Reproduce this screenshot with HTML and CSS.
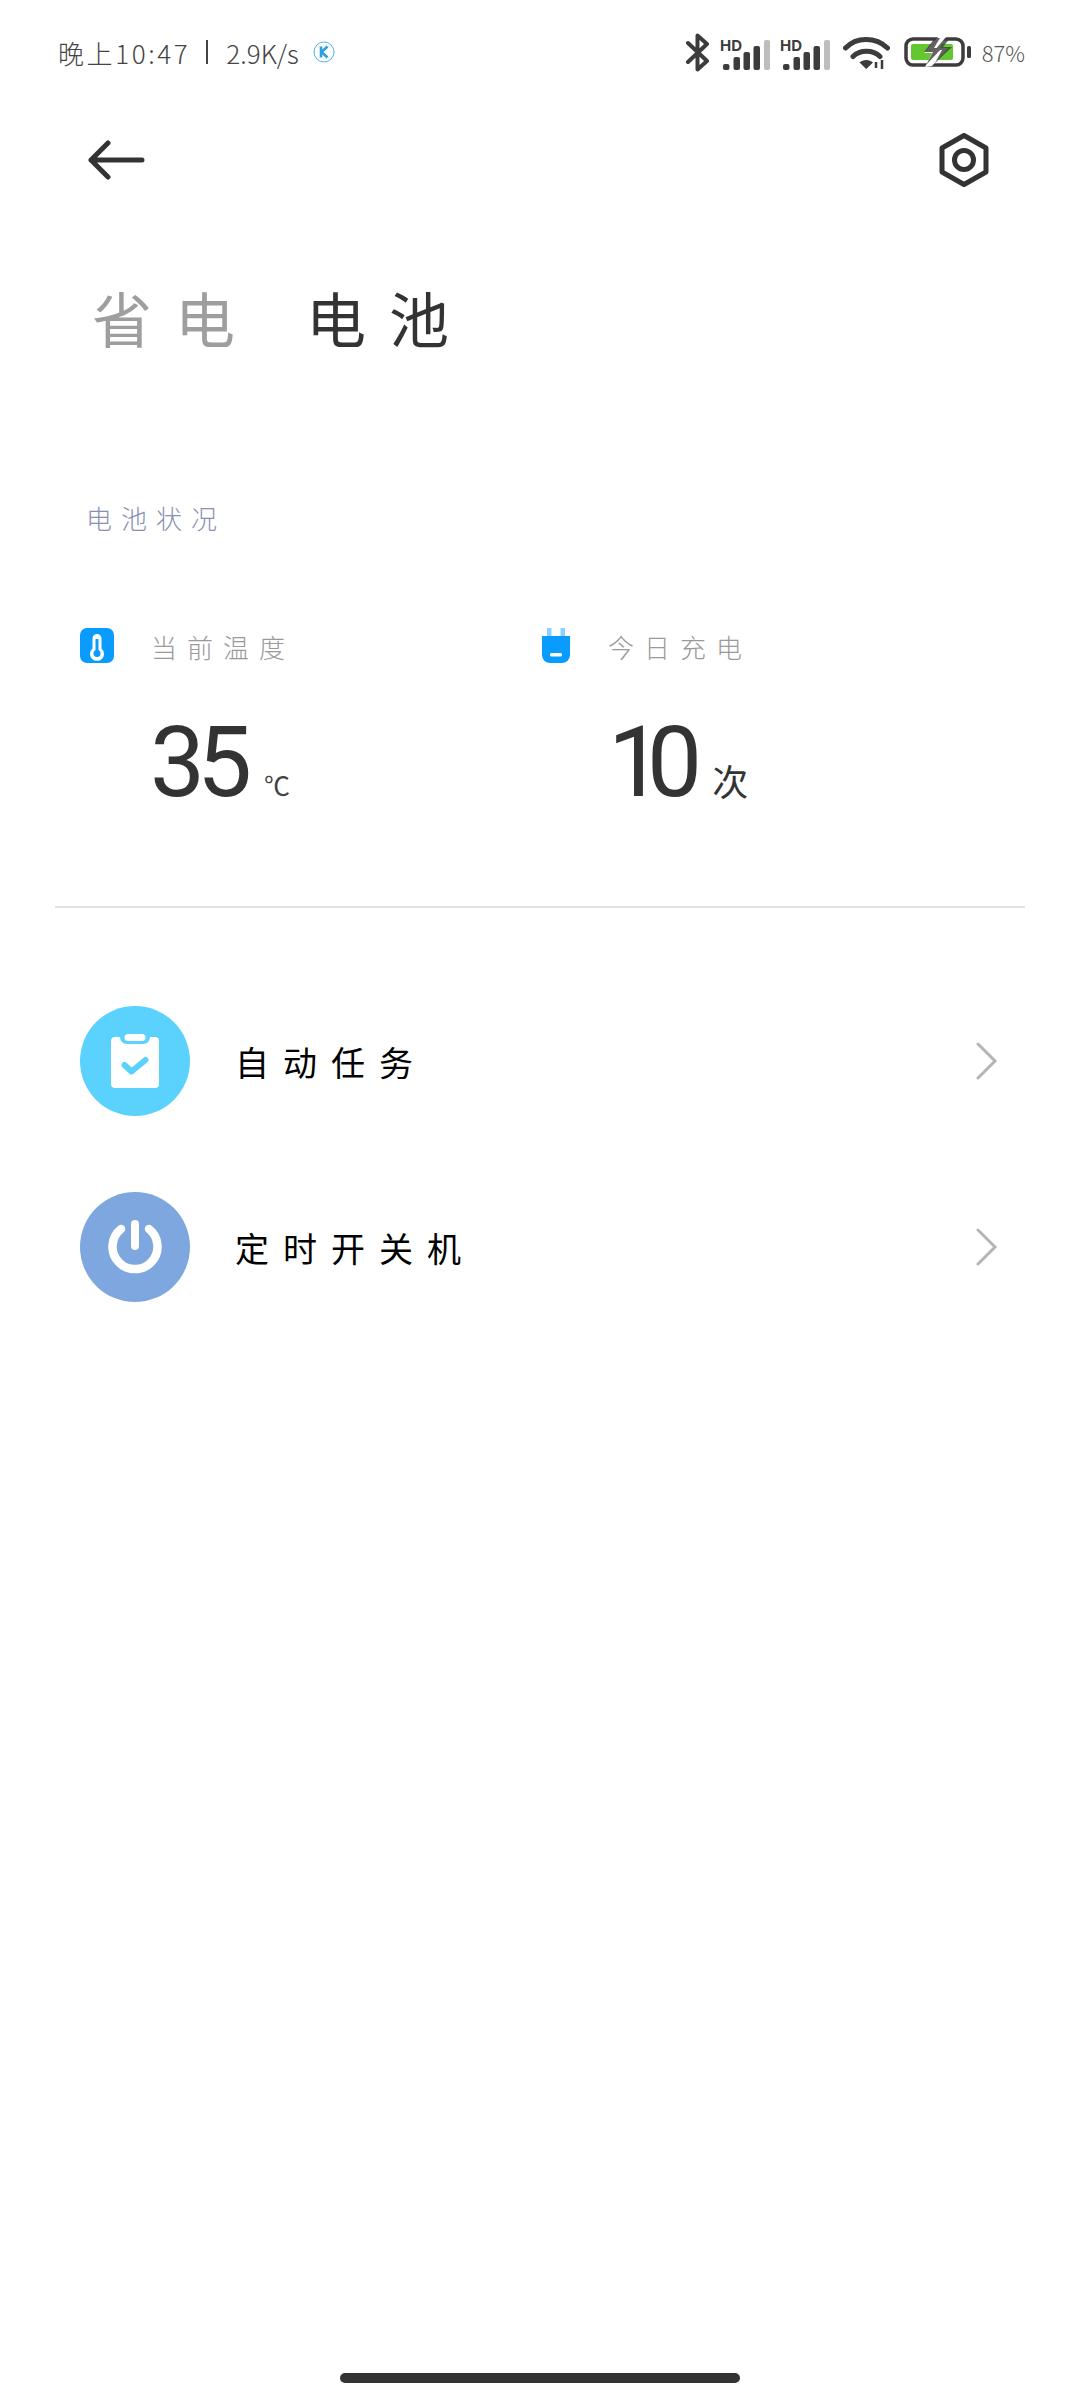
FILE: index.html
```html
<!DOCTYPE html>
<html lang="zh-CN">
<head>
    <meta charset="UTF-8">
    <title>电池</title>
    <link rel="stylesheet" href="styles.css">
</head>
<body>
<div class="page">
    <!-- status bar -->
    <div class="status">
        <div class="status-left">
            <span class="clock">晚上10:47</span>
            <span class="sep"></span>
            <span class="speed">2.9K/s</span>
            <svg class="k-badge" width="22" height="22" viewBox="0 0 22 22">
                <circle cx="11" cy="11" r="10" fill="none" stroke="#4db4e8" stroke-width="1"/>
                <path d="M8 5.500v11M14.500 5.500L8.500 11l6 5.500" fill="none" stroke="#2b9fe0" stroke-width="2.600"/>
            </svg>
        </div>
        <div class="status-right">
            <svg width="25" height="39" viewBox="0 0 25 39">
                <path d="M3 10l19 18-9.500 8.500V2.500L22 11 3 29" fill="none" stroke="#3c3c3c" stroke-width="4" stroke-linecap="round" stroke-linejoin="round"/>
            </svg>
            <svg class="sig" width="52" height="38" viewBox="0 -6 52 38">
                <text x="0" y="12" class="hd">HD</text>
                <rect x="3" y="25" width="6.500" height="6" rx="2" fill="#3c3c3c"/>
                <rect x="13.500" y="18" width="6.500" height="13" rx="2" fill="#3c3c3c"/>
                <rect x="23.500" y="13" width="6.500" height="18" rx="2" fill="#3c3c3c"/>
                <rect x="33.500" y="7" width="6.500" height="24" rx="2" fill="#3c3c3c"/>
                <rect x="44" y="1" width="6" height="30" rx="2" fill="#bdbdbd"/>
            </svg>
            <svg class="sig sig-second" width="52" height="38" viewBox="0 -6 52 38">
                <text x="0" y="12" class="hd">HD</text>
                <rect x="3" y="25" width="6.500" height="6" rx="2" fill="#3c3c3c"/>
                <rect x="13.500" y="18" width="6.500" height="13" rx="2" fill="#3c3c3c"/>
                <rect x="23.500" y="13" width="6.500" height="18" rx="2" fill="#3c3c3c"/>
                <rect x="33.500" y="7" width="6.500" height="24" rx="2" fill="#3c3c3c"/>
                <rect x="44" y="1" width="6" height="30" rx="2" fill="#bdbdbd"/>
            </svg>
            <svg class="wifi" width="47" height="34" viewBox="0 0 47 34">
                <path d="M2.500 13C13 1.500 33 1.500 44.500 13M10 21.500c7-7 20-7 27 0" fill="none" stroke="#3c3c3c" stroke-width="5" stroke-linecap="round"/>
                <path d="M16.500 27.500c3.500-3.500 10-3.500 13.500 0l-6.750 6.500z" fill="#3c3c3c"/>
                <path d="M33 27v6M39 25v9" stroke="#3c3c3c" stroke-width="2.500"/>
            </svg>
            <svg class="batt" width="68" height="30" viewBox="0 0 68 30">
                <rect x="2" y="2" width="57" height="26" rx="7" fill="none" stroke="#3c3c3c" stroke-width="3.500"/>
                <rect x="7" y="7" width="42" height="16" rx="2" fill="#63c72f"/>
                <path d="M34 0L20 16h8l-7 14 7-1 16-18h-8l6-11z" fill="#fff"/>
                <path d="M31 1L20 15h9l-7 13 16-17h-8l6-10zM41 1L31 13h7l-7 13 17-16h-9l7-9z" fill="#3c3c3c" opacity=".8"/>
                <rect x="63" y="9" width="4" height="12" rx="1.500" fill="#3c3c3c"/>
            </svg>
            <span class="pct">87%</span>
        </div>
    </div>

    <!-- nav -->
    <div class="nav">
        <svg width="57" height="40" viewBox="0 0 57 40">
            <path d="M54 20H3M20 3L3 20l17 17" fill="none" stroke="#333" stroke-width="5" stroke-linecap="round" stroke-linejoin="round"/>
        </svg>
        <svg width="50" height="54" viewBox="0 0 50 54">
            <path d="M25 2.500l22 12.500v24L25 51.500 3 39V15z" fill="none" stroke="#333" stroke-width="5" stroke-linejoin="round"/>
            <circle cx="25" cy="27" r="9.500" fill="none" stroke="#333" stroke-width="5"/>
        </svg>
    </div>

    <!-- tabs -->
    <div class="tabs">
        <span class="tab tab-off">省电</span>
        <span class="tab">电池</span>
    </div>

    <div class="section-title">电池状况</div>

    <div class="stats">
        <div class="stat">
            <div class="stat-head">
                <svg width="34" height="36" viewBox="0 0 34 36">
                    <rect width="34" height="35" rx="7" fill="#0a9bff"/>
                    <path d="M17 6a4.500 4.500 0 0 0-4.500 4.500v10a7 7 0 1 0 9 0v-10A4.500 4.500 0 0 0 17 6z" fill="#fff"/>
                    <circle cx="17" cy="25.500" r="3.500" fill="#0a9bff"/>
                    <rect x="15.500" y="11" width="3" height="13" fill="#0a9bff"/>
                </svg>
                <span class="stat-label">当前温度</span>
            </div>
            <div class="stat-value">
                <span class="num">35</span>
                <span class="unit-temp">℃</span>
            </div>
        </div>
        <div class="stat">
            <div class="stat-head">
                <svg width="30" height="36" viewBox="0 0 30 36">
                    <rect x="6" y="0" width="4.500" height="10" fill="#8fd0ff"/>
                    <rect x="19.500" y="0" width="4.500" height="10" fill="#8fd0ff"/>
                    <path d="M1 8h28v19a8 8 0 0 1-8 8H9a8 8 0 0 1-8-8z" fill="#0a9bff"/>
                    <rect x="9" y="25" width="12" height="3.500" rx="1.500" fill="#fff"/>
                </svg>
                <span class="stat-label">今日充电</span>
            </div>
            <div class="stat-value">
                <span class="num num-tight">10</span>
                <span class="unit-count">次</span>
            </div>
        </div>
    </div>

    <div class="divider"></div>

    <div class="list">
        <div class="row">
            <div class="circle circle-task">
                <svg width="48" height="54" viewBox="0 0 48 54">
                    <path d="M4 3h5c0 4 3 7 7 7h16c4 0 7-3 7-7h5a4 4 0 0 1 4 4v43a4 4 0 0 1-4 4H4a4 4 0 0 1-4-4V7a4 4 0 0 1 4-4z" fill="#fff"/>
                    <rect x="13.500" y="0" width="21" height="7" rx="3.500" fill="#fff"/>
                    <path d="M13.500 31l7 6.500L34.500 26" fill="none" stroke="#5bd2fe" stroke-width="6" stroke-linecap="round" stroke-linejoin="round"/>
                </svg>
            </div>
            <span class="row-label">自动任务</span>
            <svg class="chev" width="22" height="38" viewBox="0 0 22 38">
                <path d="M2 2l17 17L2 36" fill="none" stroke="#b5b5b5" stroke-width="3" stroke-linecap="round"/>
            </svg>
        </div>
        <div class="row">
            <div class="circle circle-power">
                <svg width="54" height="54" viewBox="0 0 54 54">
                    <path d="M13 9A22.500 22.500 0 1 0 41 9" fill="none" stroke="#fff" stroke-width="8.500" stroke-linecap="round"/>
                    <path d="M27 4v22" fill="none" stroke="#fff" stroke-width="8" stroke-linecap="round"/>
                </svg>
            </div>
            <span class="row-label">定时开关机</span>
            <svg class="chev" width="22" height="38" viewBox="0 0 22 38">
                <path d="M2 2l17 17L2 36" fill="none" stroke="#b5b5b5" stroke-width="3" stroke-linecap="round"/>
            </svg>
        </div>
    </div>

    <div class="home-bar"></div>
</div>
</body>
</html>
```

FILE: styles.css
```css
body{
    margin: 0;
    background-color: #fff;
    font-family: "Noto Sans CJK SC", "Noto Sans", sans-serif;
}
.page{
    width: 1080px; height: 2400px;
    display: flex;
    flex-direction: column;
    overflow: hidden;
}

/* status bar */
.status{
    height: 104px;
    padding: 0 55px 0 58px;
    display: flex;
    align-items: center;
    justify-content: space-between;
    color: #444;
}
.status-left{
    display: flex;
    align-items: center;
    font-size: 26px;
    font-weight: 300;
}
.clock{
    letter-spacing: 2.600px;
}
.sep{
    width: 2px; height: 24px;
    margin: 0 18px 0 16px;
    background-color: #444;
}
.speed{
    letter-spacing: 0;
}
.k-badge{
    margin-left: 14px;
}
.status-right{
    display: flex;
    align-items: center;
}
.sig{
    margin-left: 10px;
}
.sig-second{
    margin-left: 8px;
}
.hd{
    font-family: "Inter", sans-serif;
    font-weight: 700;
    font-size: 15px;
    fill: #3c3c3c;
}
.wifi{
    margin-left: 11px;
}
.batt{
    margin-left: 14px;
}
.pct{
    margin-left: 10px;
    font-size: 22px;
    font-weight: 300;
    color: #555;
}

/* nav */
.nav{
    height: 54px;
    margin-top: 29px;
    padding: 0 91px 0 88px;
    display: flex;
    align-items: center;
    justify-content: space-between;
}

/* tabs */
.tabs{
    margin-top: 90px;
    padding-left: 92px;
    display: flex;
    gap: 48px;
    font-size: 60px;
    line-height: 80px;
    letter-spacing: 23px;
    color: #333;
}
.tab-off{
    color: #9e9e9e;
}

.section-title{
    margin-top: 143px;
    padding-left: 86px;
    font-size: 26px;
    line-height: 36px;
    letter-spacing: 9px;
    font-weight: 300;
    color: #8a90b2;
}

/* stats */
.stats{
    margin-top: 92px;
    padding-left: 80px;
    display: flex;
}
.stat{
    width: 461px;
}
.stat-head{
    height: 36px;
    display: flex;
    align-items: center;
}
.stat-label{
    margin-left: 37px;
    font-size: 26px;
    font-weight: 300;
    letter-spacing: 10px;
    color: #9a9a9a;
}
.stat-value{
    margin-top: 49px;
    padding-left: 70px;
    height: 100px;
    display: flex;
    align-items: baseline;
    color: #333;
    font-family: "Roboto", sans-serif;
}
.num{
    font-size: 98px;
    line-height: 100px;
    letter-spacing: -8px;
}
.num-tight{
    margin-left: -3px;
    letter-spacing: -16px;
}
.unit-temp{
    margin-left: 20px;
    font-size: 26px;
    font-weight: 300;
    color: #444;
}
.unit-count{
    margin-left: 26px;
    font-family: "Noto Sans CJK SC", sans-serif;
    font-size: 36px;
}

.divider{
    height: 2px;
    margin: 93px 55px 0 55px;
    background-color: #e2e2e2;
}

/* list */
.list{
    margin-top: 98px;
    padding: 0 82px 0 80px;
    display: flex;
    flex-direction: column;
    gap: 76px;
}
.row{
    height: 110px;
    display: flex;
    align-items: center;
}
.circle{
    width: 110px; height: 110px;
    border-radius: 50%;
    display: flex;
    align-items: center;
    justify-content: center;
}
.circle-task{
    background-color: #5bd2fe;
}
.circle-power{
    background-color: #7ea6df;
}
.row-label{
    margin-left: 45px;
    font-size: 34px;
    letter-spacing: 14px;
    color: #000;
}
.chev{
    margin-left: auto;
}

.home-bar{
    width: 400px; height: 10px;
    margin: auto auto 17px;
    border-radius: 5px;
    background-color: #333;
}
```
